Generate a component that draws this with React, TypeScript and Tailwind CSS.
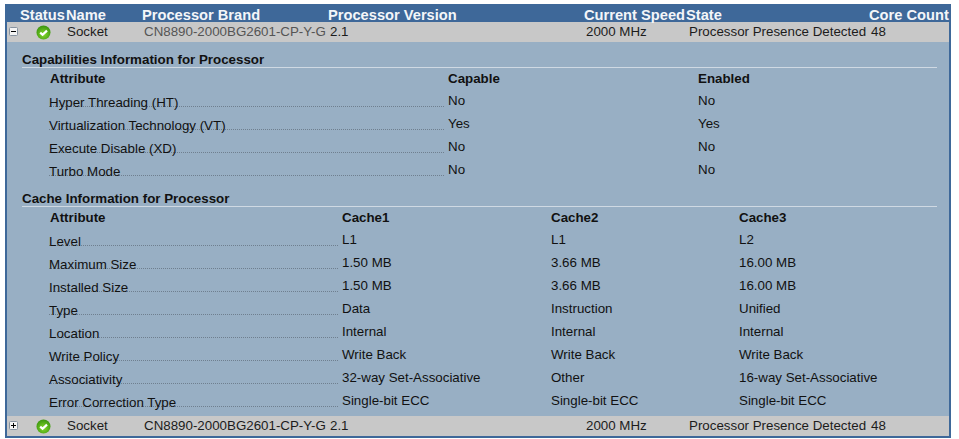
import React from "react";

const columns = "grid grid-cols-[60px_76px_186px_256px_102px_183px_1fr]";
const capColumns = "grid grid-cols-[399px_250px_1fr]";
const cacheColumns = "grid grid-cols-[293px_209px_188px_1fr]";

const capabilities = [
  ["Hyper Threading (HT)", "No", "No"],
  ["Virtualization Technology (VT)", "Yes", "Yes"],
  ["Execute Disable (XD)", "No", "No"],
  ["Turbo Mode", "No", "No"],
];

const cache = [
  ["Level", "L1", "L1", "L2"],
  ["Maximum Size", "1.50 MB", "3.66 MB", "16.00 MB"],
  ["Installed Size", "1.50 MB", "3.66 MB", "16.00 MB"],
  ["Type", "Data", "Instruction", "Unified"],
  ["Location", "Internal", "Internal", "Internal"],
  ["Write Policy", "Write Back", "Write Back", "Write Back"],
  ["Associativity", "32-way Set-Associative", "Other", "16-way Set-Associative"],
  ["Error Correction Type", "Single-bit ECC", "Single-bit ECC", "Single-bit ECC"],
];

const StatusIcon = () => (
  <svg width="15" height="15" viewBox="0 0 15 15" className="block">
    <defs>
      <radialGradient id="ok" cx="50%" cy="62%" r="60%">
        <stop offset="0%" stopColor="#86d92c" />
        <stop offset="100%" stopColor="#3c960f" />
      </radialGradient>
    </defs>
    <circle cx="7.5" cy="7.5" r="7" fill="url(#ok)" />
    <path d="M4.2 7.6 L6.6 9.8 L11 5.6" fill="none" stroke="#fff" strokeWidth="2.2" />
  </svg>
);

const Toggle = ({ open }: { open: boolean }) => (
  <svg width="9" height="9" viewBox="0 0 9 9" className="block -translate-y-[1px]">
    <rect x="0.5" y="0.5" width="8" height="8" rx="1" fill="#f4f4f4" stroke="#8793a0" />
    <path d={open ? "M2 4.5H7" : "M2 4.5H7M4.5 2V7"} stroke="#000" />
  </svg>
);

const ProcessorRow = ({ open, brandClass }: { open: boolean; brandClass: string }) => (
  <div className={`${columns} h-5 items-center bg-[#c8c8c8] text-[#1c1c1c]`}>
    <div className="flex items-center pl-[2px]">
      <Toggle open={open} />
      <div className="ml-[18px]">
        <StatusIcon />
      </div>
    </div>
    <div>Socket</div>
    <div className={`pl-[1px] whitespace-nowrap ${brandClass}`}>CN8890-2000BG2601-CP-Y-G</div>
    <div className="pl-[1px]">2.1</div>
    <div className="pl-[1px]">2000 MHz</div>
    <div className="pl-[2px] whitespace-nowrap">Processor Presence Detected</div>
    <div className="pl-[1px]">48</div>
  </div>
);

// dotted rule runs under the whole label, so it shows between the words too
const Leader = ({ label, width }: { label: string; width: string }) => (
  <div className={`mt-[9px] h-[8px] self-start whitespace-nowrap border-b border-dotted border-[#6f7f8f] leading-[7px] ${width}`}>
    {label}
  </div>
);

export default function App() {
  return (
    <div className="h-[439px] w-[959px] bg-white pt-[4px] pl-[5px] font-['Liberation_Sans',Arial,sans-serif] text-[13.33px]">
      <div className="w-[946px] border-x-2 border-b-2 border-[#3e6899] bg-[#98afc4]">
        {/* Header */}
        <div className={`${columns} -mx-[1px] h-[18px] items-center bg-[#3e6899] text-[14.67px] font-bold text-[#f4f6f9]`}>
          <div className="pl-[14px]">Status</div>
          <div>Name</div>
          <div>Processor Brand</div>
          <div>Processor Version</div>
          <div className="whitespace-nowrap">Current Speed</div>
          <div>State</div>
          <div className="whitespace-nowrap">Core Count</div>
        </div>

        <ProcessorRow open brandClass="text-[#555555]" />

        {/* Details */}
        <div className="h-[374px] pl-[15px] pt-[10px] text-[#111]">
          <h3 className="h-[16px] w-[915px] border-b border-[#cfd9e3] font-bold leading-[15px]">
            Capabilities Information for Processor
          </h3>
          <div className={`${capColumns} box-content h-[15px] pl-[27px] pt-[3px] font-bold leading-[15px]`}>
            <div className="pl-[1px]">Attribute</div>
            <div>Capable</div>
            <div>Enabled</div>
          </div>
          <div className="mt-[4px]">
            {capabilities.map((row) => (
              <div key={row[0]} className={`${capColumns} h-[23px] items-center pl-[27px]`}>
                <Leader label={row[0]} width="w-[395px]" />
                <div className="-translate-y-[1px]">{row[1]}</div>
                <div className="-translate-y-[1px]">{row[2]}</div>
              </div>
            ))}
          </div>

          <h3 className="mt-[9px] h-[16px] w-[915px] border-b border-[#cfd9e3] font-bold leading-[15px]">
            Cache Information for Processor
          </h3>
          <div className={`${cacheColumns} box-content h-[15px] pl-[27px] pt-[3px] font-bold leading-[15px]`}>
            <div className="pl-[1px]">Attribute</div>
            <div>Cache1</div>
            <div>Cache2</div>
            <div>Cache3</div>
          </div>
          <div className="mt-[4px]">
            {cache.map((row) => (
              <div key={row[0]} className={`${cacheColumns} h-[23px] items-center pl-[27px]`}>
                <Leader label={row[0]} width="w-[289px]" />
                <div className="-translate-y-[1px]">{row[1]}</div>
                <div className="-translate-y-[1px]">{row[2]}</div>
                <div className="-translate-y-[1px]">{row[3]}</div>
              </div>
            ))}
          </div>
        </div>

        <ProcessorRow open={false} brandClass="" />
      </div>
    </div>
  );
}
